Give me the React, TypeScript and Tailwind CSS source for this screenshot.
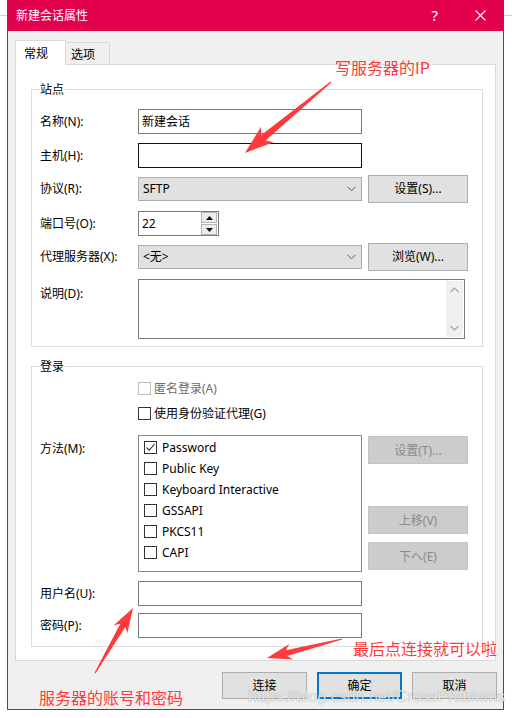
import React from "react";

type Pt = [number, number];

// red hand-drawn style annotation arrow
function arrowPoints(tail: Pt, tip: Pt, headLen: number, headHalf: number, shaftHalf: number) {
  const dx = tip[0] - tail[0];
  const dy = tip[1] - tail[1];
  const len = Math.hypot(dx, dy);
  const ux = dx / len;
  const uy = dy / len;
  const nx = -uy;
  const ny = ux;
  const bx = tip[0] - ux * headLen;
  const by = tip[1] - uy * headLen;
  const pts: Pt[] = [
    [tail[0] + nx * 0.6, tail[1] + ny * 0.6],
    [bx + nx * shaftHalf, by + ny * shaftHalf],
    [bx - ux * 5 + nx * headHalf, by - uy * 5 + ny * headHalf],
    tip,
    [bx - ux * 5 - nx * headHalf, by - uy * 5 - ny * headHalf],
    [bx - nx * shaftHalf, by - ny * shaftHalf],
    [tail[0] - nx * 0.6, tail[1] - ny * 0.6],
  ];
  return pts.map((p) => `${p[0].toFixed(1)},${p[1].toFixed(1)}`).join(" ");
}

function Chevron() {
  return (
    <svg width="9" height="6" viewBox="0 0 9 6" className="shrink-0">
      <path d="M0.5 0.8 L4.5 4.8 L8.5 0.8" fill="none" stroke="#555" strokeWidth="1" />
    </svg>
  );
}

function Label({ children, className = "" }: { children: React.ReactNode; className?: string }) {
  return <div className={`w-[106px] shrink-0 pl-[8px] ${className}`}>{children}</div>;
}

function Btn({ children, disabled = false, className = "" }: { children: React.ReactNode; disabled?: boolean; className?: string }) {
  return (
    <div
      className={`flex h-[28px] w-[100px] items-center justify-center border ${
        disabled ? "border-[#c4c4c4] bg-[#cccccc] text-[#8a8a8a]" : "border-[#adadad] bg-[#e1e1e1] text-black"
      } ${className}`}
    >
      {children}
    </div>
  );
}

function Select({ value }: { value: string }) {
  return (
    <div className="flex h-[24px] w-[224px] items-center justify-between border border-[#adadad] bg-[#e1e1e1] pl-[4px] pr-[5px]">
      <span>{value}</span>
      <Chevron />
    </div>
  );
}

function CheckBox({ checked = false, disabled = false }: { checked?: boolean; disabled?: boolean }) {
  return (
    <div
      className={`flex h-[13px] w-[13px] shrink-0 items-center justify-center border bg-white ${
        disabled ? "border-[#bcbcbc]" : "border-[#333333]"
      }`}
    >
      {checked && (
        <svg width="11" height="11" viewBox="0 0 11 11">
          <path d="M1.5 5.5 L4.2 8.2 L9.5 2.2" fill="none" stroke="#444" strokeWidth="1.2" />
        </svg>
      )}
    </div>
  );
}

const methods = [
  { name: "Password", checked: true },
  { name: "Public Key", checked: false },
  { name: "Keyboard Interactive", checked: false },
  { name: "GSSAPI", checked: false },
  { name: "PKCS11", checked: false },
  { name: "CAPI", checked: false },
];

export default function App() {
  return (
    <div className="relative h-[718px] w-[512px] overflow-hidden bg-white font-['Noto_Sans','Noto_Sans_CJK_SC',sans-serif] text-[12px] leading-[17px] text-black">
      <div className="absolute left-0 top-[15px] h-px w-full bg-[#cfcfcf]" />

      {/* dialog window */}
      <div className="relative ml-[7px] flex h-[710px] w-[497px] flex-col border-x border-b border-[#e3004f] bg-[#f0f0f0]">
        <div className="flex h-[31px] shrink-0 items-center bg-[#e3004f] pl-[8px] text-white">
          <span className="flex-1">新建会话属性</span>
          <span className="mr-[37px] text-[15px]">?</span>
          <svg width="11" height="11" viewBox="0 0 11 11" className="mr-[17px]">
            <path d="M0.5 0.5 L10.5 10.5 M10.5 0.5 L0.5 10.5" stroke="white" strokeWidth="1.1" />
          </svg>
        </div>

        <div className="flex flex-col px-[7px] pt-[9px]">
          {/* tabs */}
          <div className="flex h-[24px] items-end">
            <div className="relative z-10 mb-[-1px] flex h-[25px] w-[51px] items-start border border-b-0 border-[#d9d9d9] bg-white pl-[8px] pt-[4px]">
              常规
            </div>
            <div className="flex h-[22px] w-[44px] items-start border border-b-0 border-l-0 border-[#d9d9d9] bg-[#f0f0f0] pl-[5px] pt-[3px]">
              选项
            </div>
          </div>

          {/* tab panel */}
          <div className="flex h-[597px] flex-col border border-[#d9d9d9] bg-white">
            {/* 站点 */}
            <div className="relative ml-[15px] mt-[24px] flex w-[452px] flex-col border border-[#dcdcdc] pb-[7px]">
              <span className="absolute left-[8px] top-[-9px] bg-white pr-[1px]">站点</span>
              <div className="mt-[19px] flex h-[25px] items-center">
                <Label>名称(N):</Label>
                <div className="flex h-[25px] w-[224px] items-center border border-[#7a7a7a] pl-[3px]">新建会话</div>
              </div>
              <div className="mt-[9px] flex h-[25px] items-center">
                <Label>主机(H):</Label>
                <div className="h-[25px] w-[224px] border border-[#111111]" />
              </div>
              <div className="mt-[7px] flex h-[27px] items-center">
                <Label>协议(R):</Label>
                <Select value="SFTP" />
                <Btn className="ml-[6px] h-[27px]">设置(S)...</Btn>
              </div>
              <div className="mt-[9px] flex h-[25px] items-center">
                <Label>端口号(O):</Label>
                <div className="flex h-[25px] w-[81px] items-center justify-between border border-[#7a7a7a] pl-[3px] pr-px">
                  <span>22</span>
                  <div className="flex h-[23px] w-[16px] flex-col gap-px">
                    <div className="flex flex-1 items-center justify-center border border-[#b4b4b4] bg-[#ececec]">
                      <svg width="7" height="4" viewBox="0 0 7 4">
                        <path d="M0 4 L3.5 0 L7 4 Z" fill="#111" />
                      </svg>
                    </div>
                    <div className="flex flex-1 items-center justify-center border border-[#b4b4b4] bg-[#ececec]">
                      <svg width="7" height="4" viewBox="0 0 7 4">
                        <path d="M0 0 L3.5 4 L7 0 Z" fill="#111" />
                      </svg>
                    </div>
                  </div>
                </div>
              </div>
              <div className="mt-[7px] flex h-[27px] items-center">
                <Label>代理服务器(X):</Label>
                <Select value="<无>" />
                <Btn className="ml-[6px] h-[27px]">浏览(W)...</Btn>
              </div>
              <div className="mt-[9px] flex items-start">
                <Label className="mt-[6px]">说明(D):</Label>
                <div className="flex h-[60px] w-[327px] justify-end border border-[#7a7a7a] p-px">
                  <div className="flex w-[17px] flex-col items-center justify-between bg-[#f0f0f0] py-[6px]">
                    <svg width="9" height="6" viewBox="0 0 9 6">
                      <path d="M0.5 5 L4.5 1 L8.5 5" fill="none" stroke="#a6a6a6" strokeWidth="1.2" />
                    </svg>
                    <svg width="9" height="6" viewBox="0 0 9 6">
                      <path d="M0.5 1 L4.5 5 L8.5 1" fill="none" stroke="#a6a6a6" strokeWidth="1.2" />
                    </svg>
                  </div>
                </div>
              </div>
            </div>

            {/* 登录 */}
            <div className="relative ml-[15px] mt-[19px] flex w-[452px] flex-col border border-[#dcdcdc] pb-[8px]">
              <span className="absolute left-[8px] top-[-9px] bg-white pr-[1px]">登录</span>
              <div className="ml-[106px] mt-[15px] flex h-[13px] items-center gap-[3px] text-[#6d6d6d]">
                <CheckBox disabled />
                <span className="whitespace-nowrap">匿名登录(A)</span>
              </div>
              <div className="ml-[106px] mt-[12px] flex h-[13px] items-center gap-[3px]">
                <CheckBox />
                <span className="whitespace-nowrap">使用身份验证代理(G)</span>
              </div>
              <div className="mt-[15px] flex items-start">
                <Label className="mt-[5px]">方法(M):</Label>
                <div className="flex h-[137px] w-[224px] flex-col border border-[#828790] pl-[5px] pt-px">
                  {methods.map((m) => (
                    <div key={m.name} className="flex h-[21px] items-center gap-[5px]">
                      <CheckBox checked={m.checked} />
                      <span>{m.name}</span>
                    </div>
                  ))}
                </div>
                <div className="ml-[6px] flex flex-col">
                  <Btn disabled className="mt-px">设置(T)...</Btn>
                  <Btn disabled className="mt-[42px]">上移(V)</Btn>
                  <Btn disabled className="mt-[8px]">下へ(E)</Btn>
                </div>
              </div>
              <div className="mt-[9px] flex h-[25px] items-center">
                <Label>用户名(U):</Label>
                <div className="h-[25px] w-[224px] border border-[#7a7a7a]" />
              </div>
              <div className="mt-[7px] flex h-[25px] items-center">
                <Label>密码(P):</Label>
                <div className="h-[25px] w-[224px] border border-[#7a7a7a]" />
              </div>
            </div>
          </div>

          {/* dialog buttons */}
          <div className="mr-[-1px] mt-[11px] flex justify-end gap-[10px]">
            <div className="flex h-[27px] w-[85px] items-center justify-center border border-[#adadad] bg-[#e1e1e1]">连接</div>
            <div className="flex h-[27px] w-[85px] items-center justify-center border-2 border-[#0078d7] bg-[#e1e1e1]">确定</div>
            <div className="flex h-[27px] w-[85px] items-center justify-center border border-[#adadad] bg-[#e1e1e1]">取消</div>
          </div>
        </div>
      </div>

      {/* annotations drawn over the screenshot */}
      <svg className="pointer-events-none absolute left-0 top-0" width="512" height="718" viewBox="0 0 512 718">
        <polygon points={arrowPoints([331, 82], [245, 153], 24, 10, 3.5)} fill="#ff3a3a" />
        <polygon points={arrowPoints([342, 639], [267, 658], 20, 8, 3)} fill="#ff3a3a" />
        <polygon points={arrowPoints([95, 673], [133, 608], 20, 8, 3)} fill="#ff3a3a" />
      </svg>
      <span className="absolute left-[335px] top-[56px] font-['Noto_Sans_CJK_SC',sans-serif] text-[16px] leading-[22px] text-[#ff3a3a]">
        写服务器的IP
      </span>
      <span className="absolute left-[353px] top-[637px] font-['Noto_Sans_CJK_SC',sans-serif] text-[16px] leading-[22px] text-[#ff3a3a]">
        最后点连接就可以啦
      </span>
      <span className="absolute left-[39px] top-[686px] font-['Noto_Sans_CJK_SC',sans-serif] text-[16px] leading-[22px] text-[#ff3a3a]">
        服务器的账号和密码
      </span>
      <span className="absolute left-[248px] top-[686px] font-['Liberation_Sans',sans-serif] text-[16px] leading-[22px] text-white/80 [text-shadow:0_0_1px_rgba(0,0,0,0.45)]">
        https://blog.csdn.net/CrossProblems
      </span>
    </div>
  );
}
